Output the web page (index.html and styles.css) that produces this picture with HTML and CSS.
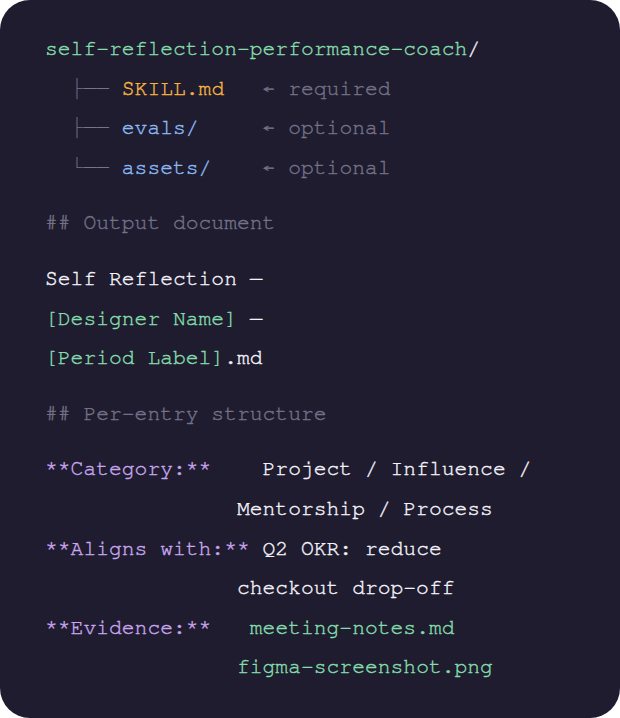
FILE: index.html
```html
<!DOCTYPE html>
<html lang="en">
<head>
<meta charset="utf-8">
<title>Skill layout</title>
<link rel="stylesheet" href="styles.css">
</head>
<body>
<main class="card">
  <section class="block">
    <div class="ln"><span class="green">self-reflection-performance-coach</span><span class="white">/</span></div>
    <div class="ln"><span class="tree">  ├── </span><span class="orange">SKILL.md</span>   <span class="muted">← required</span></div>
    <div class="ln"><span class="tree">  ├── </span><span class="blue">evals/</span>     <span class="muted">← optional</span></div>
    <div class="ln"><span class="tree">  └── </span><span class="blue">assets/</span>    <span class="muted">← optional</span></div>
  </section>
  <section class="block">
    <div class="ln muted">## Output document</div>
  </section>
  <section class="block">
    <div class="ln white">Self Reflection —</div>
    <div class="ln"><span class="green">[Designer Name]</span><span class="white"> —</span></div>
    <div class="ln"><span class="green">[Period Label]</span><span class="white">.md</span></div>
  </section>
  <section class="block">
    <div class="ln muted">## Per-entry structure</div>
  </section>
  <section class="block">
    <div class="ln"><span class="purple">**Category:**</span><span class="white">    Project / Influence /</span></div>
    <div class="ln white">               Mentorship / Process</div>
    <div class="ln"><span class="purple">**Aligns with:**</span><span class="white"> Q2 OKR: reduce</span></div>
    <div class="ln white">               checkout drop-off</div>
    <div class="ln"><span class="purple">**Evidence:**</span>   <span class="green">meeting-notes.md</span></div>
    <div class="ln">               <span class="green">figma-screenshot.png</span></div>
  </section>
</main>
</body>
</html>
```
FILE: styles.css
```css
html, body {
  margin: 0;
  padding: 0;
  background: #ffffff;
}
.card {
  box-sizing: border-box;
  width: 620px;
  height: 718px;
  background: #1e1c2e;
  border-radius: 30px;
  padding: 29px 45px 28px;
  display: flex;
  flex-direction: column;
  gap: 16px;
  font-family: "Nimbus Mono PS", "Nimbus Mono L", "FreeMono", "Courier New", "Liberation Mono", "DejaVu Sans Mono", monospace;
  font-size: 21.33px;
  color: #e6e4ee;
  -webkit-text-stroke: 0.4px currentColor;
}
.block {
  display: flex;
  flex-direction: column;
}
.ln {
  white-space: pre;
  line-height: 39.6px;
  height: 39.6px;
}
.green { color: #85dcac; }
.white { color: #f4f2fa; }
.orange { color: #f7b442; }
.blue { color: #8cbaf5; }
.purple { color: #c9a6ee; }
.muted { color: #747188; }
.tree { color: #77738f; -webkit-text-stroke: 0; }
```
